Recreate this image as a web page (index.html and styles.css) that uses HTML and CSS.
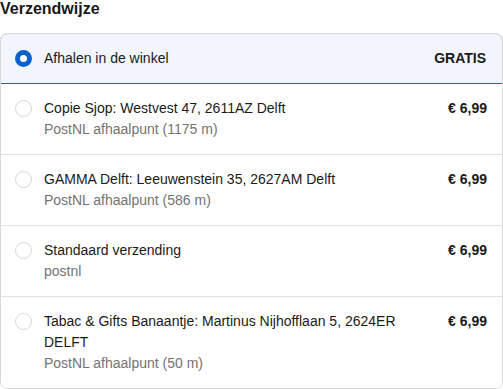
FILE: index.html
```html
<!DOCTYPE html>
<html lang="nl">
<head>
<meta charset="utf-8">
<link rel="stylesheet" href="styles.css">
</head>
<body>
<section class="shipping">
  <h2 class="title">Verzendwijze</h2>
  <div class="options">
    <label class="option selected">
      <span class="radio"></span>
      <span class="info"><span class="name">Afhalen in de winkel</span></span>
      <span class="price">GRATIS</span>
    </label>
    <label class="option">
      <span class="radio"></span>
      <span class="info"><span class="name">Copie Sjop: Westvest 47, 2611AZ Delft</span><span class="sub">PostNL afhaalpunt (1175 m)</span></span>
      <span class="price">€ 6,99</span>
    </label>
    <label class="option">
      <span class="radio"></span>
      <span class="info"><span class="name">GAMMA Delft: Leeuwenstein 35, 2627AM Delft</span><span class="sub">PostNL afhaalpunt (586 m)</span></span>
      <span class="price">€ 6,99</span>
    </label>
    <label class="option">
      <span class="radio"></span>
      <span class="info"><span class="name">Standaard verzending</span><span class="sub">postnl</span></span>
      <span class="price">€ 6,99</span>
    </label>
    <label class="option">
      <span class="radio"></span>
      <span class="info"><span class="name">Tabac &amp; Gifts Banaantje: Martinus Nijhofflaan 5, 2624ER DELFT</span><span class="sub">PostNL afhaalpunt (50 m)</span></span>
      <span class="price">€ 6,99</span>
    </label>
  </div>
</section>
</body>
</html>
```

FILE: styles.css
```css
* { box-sizing: border-box; }
html, body { margin: 0; padding: 0; background: #fff; }
body {
  font-family: "Liberation Sans", Arial, sans-serif;
  color: #1a1a1a;
  font-size: 14px;
}
.shipping { width: 503px; }
.title {
  margin: 0;
  font-size: 16px;
  line-height: 18px;
  font-weight: 700;
  color: #1a1a1a;
  padding-bottom: 15px;
}
.options {
  border: 1px solid #d9d9d9;
  border-radius: 7px;
  overflow: hidden;
}
.option {
  display: flex;
  align-items: flex-start;
  padding: 14px 15px 14px 14px;
  border-top: 1px solid #e1e1e1;
  line-height: 21px;
  background: #fff;
}
.option:first-child { border-top: none; }
.option.selected {
  background: #f3f5fd;
  border: 1px solid #1a63c4;
  border-radius: 7px 7px 0 0;
  margin: -1px -1px 0 -1px;
  padding: 14px 16px 14px 14px;
}
.option.selected + .option { border-top: none; }
.radio {
  flex: none;
  width: 17px;
  height: 17px;
  border-radius: 50%;
  border: 1px solid #d6d6d6;
  background: #fff;
  margin-top: 2px;
  margin-right: 12px;
}
.option.selected .radio {
  border: 5.5px solid #0a5fd1;
  background: #fff;
}
.info {
  flex: 1;
  display: flex;
  flex-direction: column;
  padding-right: 24px;
}
.name { color: #1a1a1a; }
.sub { color: #737373; }
.price {
  flex: none;
  font-weight: 700;
  color: #1a1a1a;
}
```
